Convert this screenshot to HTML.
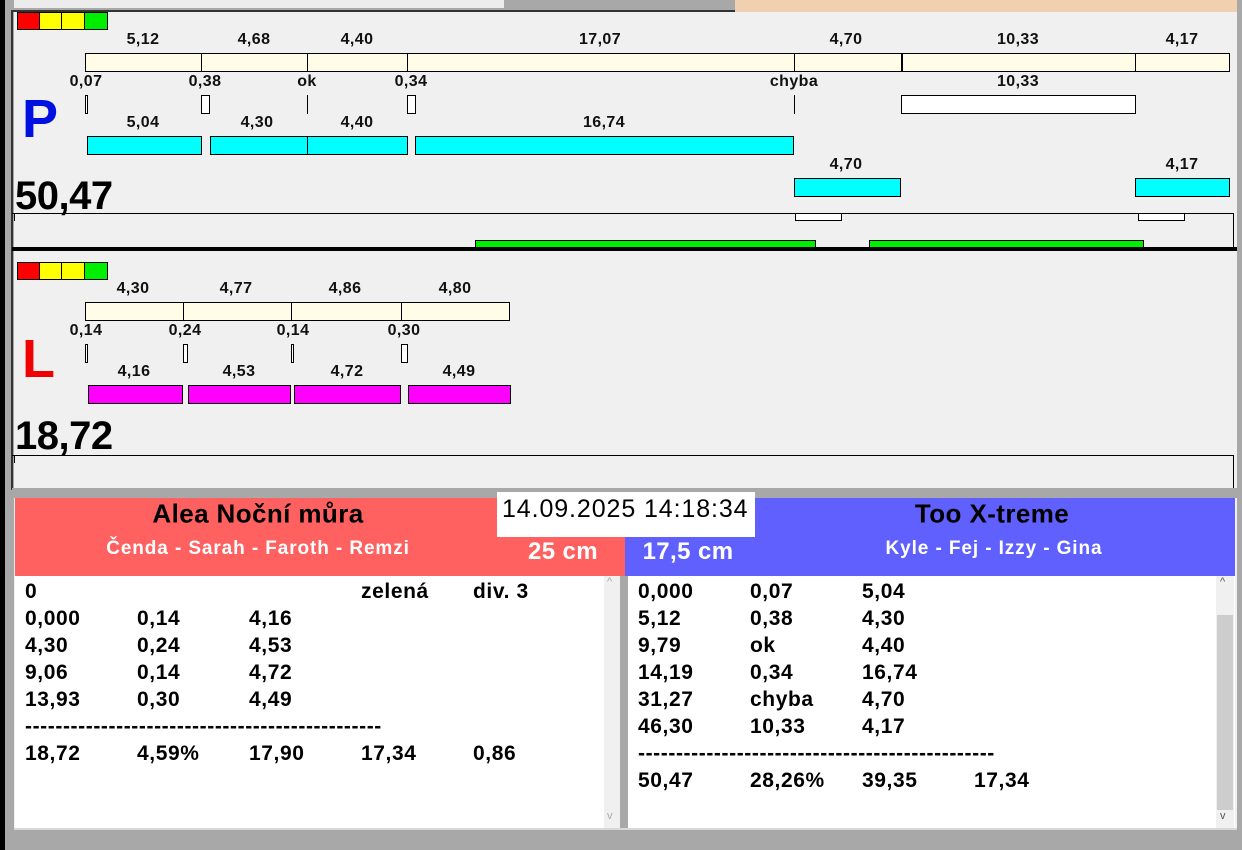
<!DOCTYPE html><html><head><meta charset="utf-8"><style>
*{margin:0;padding:0;box-sizing:border-box}
body{width:1242px;height:850px;overflow:hidden;background:#f0f0f0;position:relative;font-family:"Liberation Sans",Arial,sans-serif}
div,span{position:absolute}
.l{transform:translate(-50%,-50%);font-weight:bold;font-size:16px;letter-spacing:0.4px;white-space:nowrap;color:#111}
.c{background:#fffde8;border:1px solid #000}
.w{background:#fff;border:1px solid #000}
.cy{background:#00ffff;border:1px solid #000}
.mg{background:#ff00ff;border:1px solid #000}
.v{background:#000;width:1px}
.g{background:#00f000;border:1px solid #000}
.t{font-weight:bold;font-size:21px;letter-spacing:0.6px;line-height:27px;white-space:nowrap;color:#000}
</style></head><body>
<!-- frame -->
<div style="left:0;top:0;width:5px;height:850px;background:#000"></div>
<div style="left:5px;top:0;width:9px;height:850px;background:#a8a8a8"></div>
<div style="left:14px;top:0;width:721px;height:10px;background:#a8a8a8"></div>
<div style="left:14px;top:0;width:490px;height:8px;background:#ececec"></div>
<div style="left:735px;top:0;width:502px;height:12px;background:#f0d0b0"></div>
<div style="left:1237px;top:0;width:5px;height:850px;background:#a8a8a8"></div>
<div style="left:11px;top:10px;width:724px;height:2px;background:#333"></div>
<div style="left:11px;top:10px;width:2px;height:480px;background:#333"></div>

<!-- P panel -->
<div style="left:17px;top:12px;width:23px;height:18px;background:#f00;border:1px solid #000"></div>
<div style="left:39px;top:12px;width:23px;height:18px;background:#ff0;border:1px solid #000"></div>
<div style="left:61px;top:12px;width:24px;height:18px;background:#ff0;border:1px solid #000"></div>
<div style="left:84px;top:12px;width:24px;height:18px;background:#0e0;border:1px solid #000"></div>

<span class="l" style="left:143px;top:40px">5,12</span>
<span class="l" style="left:254px;top:40px">4,68</span>
<span class="l" style="left:357px;top:40px">4,40</span>
<span class="l" style="left:600px;top:40px">17,07</span>
<span class="l" style="left:846px;top:40px">4,70</span>
<span class="l" style="left:1018px;top:40px">10,33</span>
<span class="l" style="left:1182px;top:40px">4,17</span>
<div class="c" style="left:85px;top:53px;width:1145px;height:19px"></div>
<div class="v" style="left:201px;top:53px;height:19px"></div>
<div class="v" style="left:307px;top:53px;height:19px"></div>
<div class="v" style="left:407px;top:53px;height:19px"></div>
<div class="v" style="left:794px;top:53px;height:19px"></div>
<div class="v" style="left:901px;top:53px;height:19px;width:2px"></div>
<div class="v" style="left:1135px;top:53px;height:19px"></div>

<span class="l" style="left:86px;top:82px">0,07</span>
<span class="l" style="left:205px;top:82px">0,38</span>
<span class="l" style="left:307px;top:82px">ok</span>
<span class="l" style="left:411px;top:82px">0,34</span>
<span class="l" style="left:794px;top:82px">chyba</span>
<span class="l" style="left:1018px;top:82px">10,33</span>
<div class="w" style="left:85px;top:95px;width:3px;height:19px"></div>
<div class="w" style="left:201px;top:95px;width:9px;height:19px"></div>
<div class="v" style="left:307px;top:95px;height:19px"></div>
<div class="w" style="left:407px;top:95px;width:9px;height:19px"></div>
<div class="v" style="left:794px;top:95px;height:19px"></div>
<div class="w" style="left:901px;top:95px;width:235px;height:19px"></div>

<span style="left:22px;top:88px;font-weight:bold;font-size:54px;color:#0010e0">P</span>

<span class="l" style="left:143px;top:123px">5,04</span>
<span class="l" style="left:257px;top:123px">4,30</span>
<span class="l" style="left:357px;top:123px">4,40</span>
<span class="l" style="left:604px;top:123px">16,74</span>
<div class="cy" style="left:87px;top:136px;width:115px;height:19px"></div>
<div class="cy" style="left:210px;top:136px;width:98px;height:19px"></div>
<div class="cy" style="left:307px;top:136px;width:101px;height:19px"></div>
<div class="cy" style="left:415px;top:136px;width:379px;height:19px"></div>
<span class="l" style="left:846px;top:165px">4,70</span>
<span class="l" style="left:1182px;top:165px">4,17</span>
<div class="cy" style="left:794px;top:178px;width:107px;height:19px"></div>
<div class="cy" style="left:1135px;top:178px;width:95px;height:19px"></div>

<span style="left:15px;top:174px;font-weight:bold;font-size:40px;letter-spacing:-0.5px">50,47</span>
<div style="left:12px;top:213px;width:1222px;height:1px;background:#000"></div>
<div style="left:1233px;top:213px;width:1px;height:35px;background:#000"></div>
<div style="left:14px;top:214px;width:1px;height:7px;background:#000"></div>
<div class="w" style="left:795px;top:213px;width:47px;height:8px"></div>
<div class="w" style="left:1138px;top:213px;width:47px;height:8px"></div>
<div class="g" style="left:475px;top:240px;width:341px;height:8px"></div>
<div class="g" style="left:869px;top:240px;width:275px;height:8px"></div>
<div style="left:12px;top:247px;width:1225px;height:4px;background:#000"></div>

<!-- L panel -->
<div style="left:17px;top:262px;width:23px;height:18px;background:#f00;border:1px solid #000"></div>
<div style="left:39px;top:262px;width:23px;height:18px;background:#ff0;border:1px solid #000"></div>
<div style="left:61px;top:262px;width:24px;height:18px;background:#ff0;border:1px solid #000"></div>
<div style="left:84px;top:262px;width:24px;height:18px;background:#0e0;border:1px solid #000"></div>
<span class="l" style="left:133px;top:289px">4,30</span>
<span class="l" style="left:236px;top:289px">4,77</span>
<span class="l" style="left:345px;top:289px">4,86</span>
<span class="l" style="left:455px;top:289px">4,80</span>
<div class="c" style="left:85px;top:302px;width:425px;height:19px"></div>
<div class="v" style="left:183px;top:302px;height:19px"></div>
<div class="v" style="left:291px;top:302px;height:19px"></div>
<div class="v" style="left:401px;top:302px;height:19px"></div>
<span class="l" style="left:86px;top:331px">0,14</span>
<span class="l" style="left:185px;top:331px">0,24</span>
<span class="l" style="left:293px;top:331px">0,14</span>
<span class="l" style="left:404px;top:331px">0,30</span>
<div class="w" style="left:85px;top:344px;width:3px;height:19px"></div>
<div class="w" style="left:183px;top:344px;width:5px;height:19px"></div>
<div class="w" style="left:291px;top:344px;width:3px;height:19px"></div>
<div class="w" style="left:401px;top:344px;width:7px;height:19px"></div>
<span style="left:22px;top:328px;font-weight:bold;font-size:54px;color:#f00000">L</span>
<span class="l" style="left:134px;top:372px">4,16</span>
<span class="l" style="left:239px;top:372px">4,53</span>
<span class="l" style="left:347px;top:372px">4,72</span>
<span class="l" style="left:459px;top:372px">4,49</span>
<div class="mg" style="left:88px;top:385px;width:95px;height:19px"></div>
<div class="mg" style="left:188px;top:385px;width:103px;height:19px"></div>
<div class="mg" style="left:294px;top:385px;width:107px;height:19px"></div>
<div class="mg" style="left:408px;top:385px;width:103px;height:19px"></div>
<span style="left:15px;top:414px;font-weight:bold;font-size:40px;letter-spacing:-0.5px">18,72</span>
<div style="left:12px;top:455px;width:1222px;height:1px;background:#000"></div>
<div style="left:1233px;top:455px;width:1px;height:33px;background:#000"></div>
<div style="left:14px;top:456px;width:1px;height:7px;background:#000"></div>
<div style="left:12px;top:488px;width:1225px;height:10px;background:#a8a8a8"></div>

<!-- bottom -->
<div style="left:15px;top:498px;width:610px;height:78px;background:#ff6060"></div>
<div style="left:625px;top:498px;width:610px;height:78px;background:#6060ff"></div>
<span class="l" style="left:258px;top:514px;font-size:26px;letter-spacing:0.4px;color:#000">Alea Noční můra</span>
<span class="l" style="left:258px;top:549px;font-size:19px;letter-spacing:0.9px;color:#fff">Čenda - Sarah - Faroth - Remzi</span>
<span class="l" style="left:563px;top:552px;font-size:24px;color:#fff">25 cm</span>
<span class="l" style="left:688px;top:552px;font-size:24px;color:#fff">17,5 cm</span>
<span class="l" style="left:992px;top:514px;font-size:26px;letter-spacing:0.4px;color:#000">Too X-treme</span>
<span class="l" style="left:994px;top:549px;font-size:19px;letter-spacing:0.9px;color:#fff">Kyle - Fej - Izzy - Gina</span>
<div style="left:497px;top:492px;width:258px;height:45px;background:#fff"></div>
<span style="left:502px;top:495px;font-size:25px;letter-spacing:0.9px;white-space:nowrap">14.09.2025 14:18:34</span>

<div style="left:15px;top:576px;width:605px;height:252px;background:#fff"></div>
<div style="left:604px;top:576px;width:16px;height:252px;background:#f0f0f0"></div>
<span style="left:607px;top:576px;font-size:11px;color:#aaa">^</span>
<span style="left:607px;top:810px;font-size:11px;color:#aaa">v</span>
<div style="left:620px;top:576px;width:8px;height:252px;background:#a8a8a8"></div>
<div style="left:628px;top:576px;width:607px;height:252px;background:#fff"></div>
<div style="left:1216px;top:576px;width:18px;height:252px;background:#f0f0f0"></div>
<div style="left:1217px;top:615px;width:16px;height:195px;background:#cdcdcd"></div>
<span style="left:1220px;top:576px;font-size:11px;color:#555">^</span>
<span style="left:1220px;top:810px;font-size:11px;color:#555">v</span>
<div style="left:14px;top:828px;width:1223px;height:22px;background:#a8a8a8;border-top:2px solid #d8d8d8"></div>

<div class="t" style="left:25px;top:578px">0<br>0,000<br>4,30<br>9,06<br>13,93<br>-----------------------------------------------<br>18,72</div>
<div class="t" style="left:137px;top:605px">0,14<br>0,24<br>0,14<br>0,30<br><br>4,59%</div>
<div class="t" style="left:249px;top:605px">4,16<br>4,53<br>4,72<br>4,49<br><br>17,90</div>
<div class="t" style="left:361px;top:578px">zelená<br><br><br><br><br><br>17,34</div>
<div class="t" style="left:473px;top:578px">div. 3<br><br><br><br><br><br>0,86</div>

<div class="t" style="left:638px;top:578px">0,000<br>5,12<br>9,79<br>14,19<br>31,27<br>46,30<br>-----------------------------------------------<br>50,47</div>
<div class="t" style="left:750px;top:578px">0,07<br>0,38<br>ok<br>0,34<br>chyba<br>10,33<br><br>28,26%</div>
<div class="t" style="left:862px;top:578px">5,04<br>4,30<br>4,40<br>16,74<br>4,70<br>4,17<br><br>39,35</div>
<div class="t" style="left:974px;top:578px"><br><br><br><br><br><br><br>17,34</div>
</body></html>
